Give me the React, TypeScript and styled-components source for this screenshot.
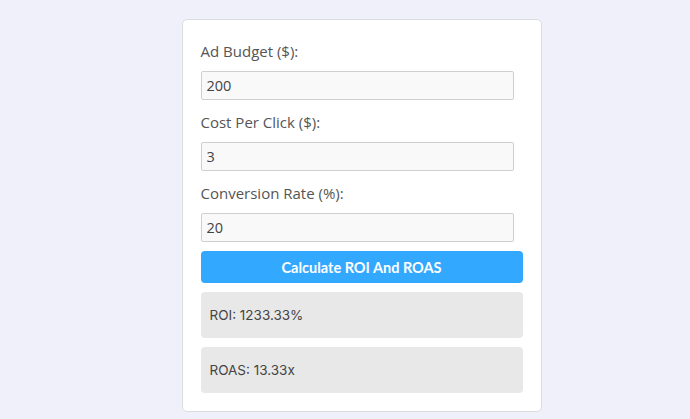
import styled, { createGlobalStyle } from 'styled-components'

const GlobalStyle = createGlobalStyle`
  body {
    margin: 0;
    background-color: #f0f0fa;
    font-family: 'Open Sans', 'Liberation Sans', sans-serif;
  }
`

const Page = styled.div`
  display: flex;
  justify-content: center;
  padding-top: 19px;
  padding-left: 33px;
`

const Card = styled.div`
  width: 322px;
  padding: 21px 18px 18px;
  background-color: #fff;
  border: 1px solid #dcdce0;
  border-radius: 5px;
`

const Field = styled.div<{ $last?: boolean }>`
  display: flex;
  flex-direction: column;
  margin-bottom: ${(p) => (p.$last ? '9px' : '12px')};
`

const Label = styled.label`
  font-size: 15px;
  line-height: 20px;
  color: #555;
  margin-bottom: 10px;
`

const Input = styled.input`
  box-sizing: border-box;
  width: 313px;
  height: 29px;
  padding: 0 5px;
  font-family: 'Open Sans', 'Liberation Sans', sans-serif;
  font-size: 14.5px;
  color: #444;
  background-color: #f9f9f9;
  border: 1px solid #cfcfcf;
  border-radius: 2px;
  outline: none;
`

const Button = styled.button`
  width: 100%;
  height: 32px;
  border: none;
  border-radius: 4px;
  background-color: #33a8ff;
  color: #fff;
  font-family: 'Lato', 'Liberation Sans', sans-serif;
  font-size: 14.5px;
  font-weight: 700;
  cursor: pointer;
`

const Results = styled.div`
  display: flex;
  flex-direction: column;
  gap: 9px;
  margin-top: 9px;
`

const Result = styled.div`
  height: 46px;
  display: flex;
  align-items: center;
  padding: 0 9px;
  border-radius: 4px;
  background-color: #e8e8e8;
  font-family: 'Inter', 'Liberation Sans', sans-serif;
  font-size: 13.5px;
  color: #444;
`

type FieldDef = { id: string; label: string; value: string }

const fields: FieldDef[] = [
  { id: 'budget', label: 'Ad Budget ($):', value: '200' },
  { id: 'cpc', label: 'Cost Per Click ($):', value: '3' },
  { id: 'conv', label: 'Conversion Rate (%):', value: '20' },
]

export default function App() {
  return (
    <>
      <GlobalStyle />
      <Page>
        <Card>
          {fields.map((f, i) => (
            <Field key={f.id} $last={i === fields.length - 1}>
              <Label htmlFor={f.id}>{f.label}</Label>
              <Input id={f.id} type="text" defaultValue={f.value} />
            </Field>
          ))}
          <Button>Calculate ROI And ROAS</Button>
          <Results>
            <Result>ROI: 1233.33%</Result>
            <Result>ROAS: 13.33x</Result>
          </Results>
        </Card>
      </Page>
    </>
  )
}
